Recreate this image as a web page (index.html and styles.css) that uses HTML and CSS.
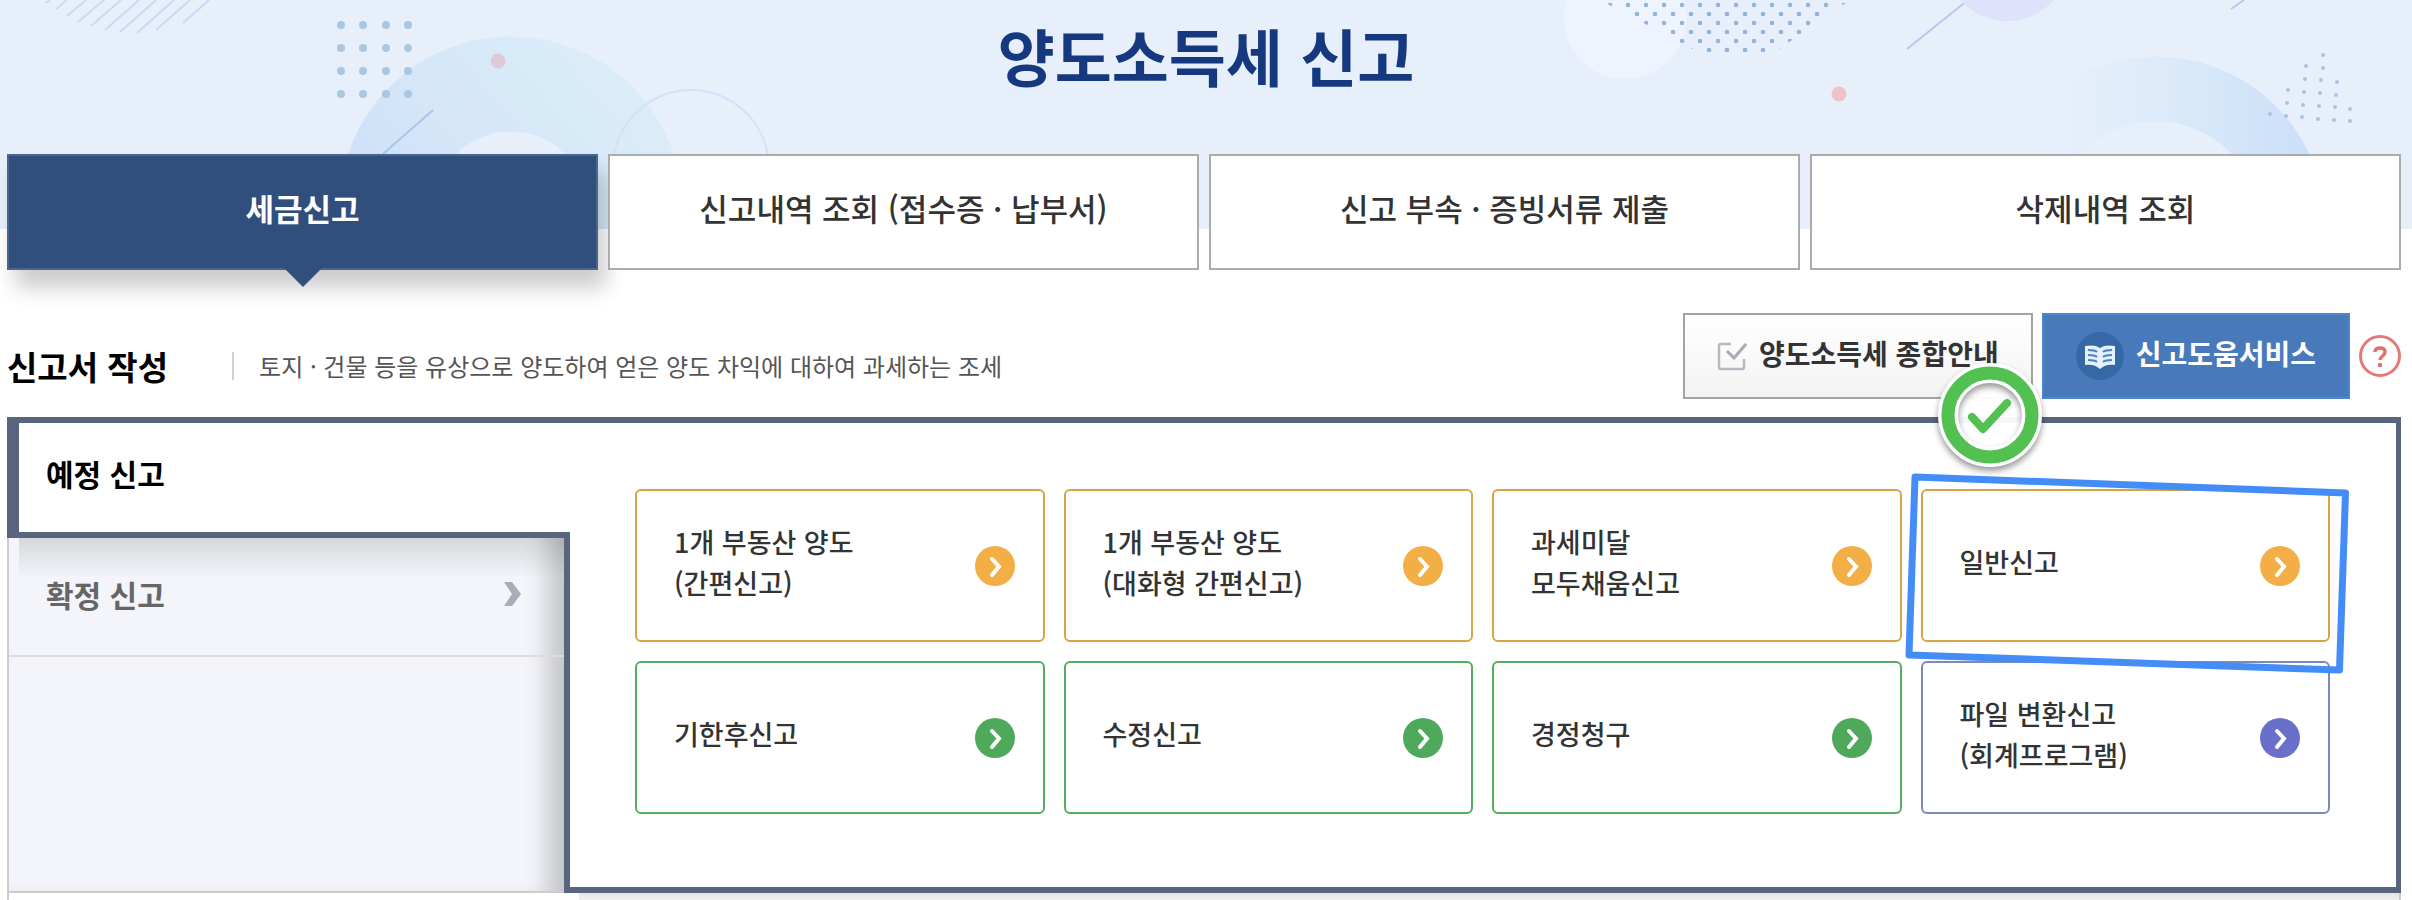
FILE: index.html
```
<!DOCTYPE html>
<html lang="ko">
<head>
  <meta charset="UTF-8">
  <meta name="viewport" content="width=device-width, initial-scale=1.0">
  <title>양도소득세 신고</title>
  <link rel="stylesheet" href="styles.css">
</head>
<body>

<svg class="symbols" aria-hidden="true">
  <symbol id="arrow" viewBox="0 0 40 40">
    <circle cx="20" cy="20" r="20" fill="currentColor"/>
    <path d="M17 13l7 7.500-7 8.500" fill="none" stroke="#fff" stroke-width="4" stroke-linecap="round"/>
  </symbol>
</svg>

<header class="banner">
  <svg class="banner-art" viewBox="0 0 2412 229" preserveAspectRatio="xMidYMin slice" aria-hidden="true">
    <defs>
      <linearGradient id="ringLeft" x1="0" y1="0.700" x2="0.800" y2="0">
        <stop offset="0" stop-color="#cddff8"/>
        <stop offset="0.500" stop-color="#d4e6f7"/>
        <stop offset="1" stop-color="#d9ecf8"/>
      </linearGradient>
      <linearGradient id="ringRight" x1="0" y1="0" x2="1" y2="0">
        <stop offset="0.100" stop-color="#dcebf9" stop-opacity="0"/>
        <stop offset="0.700" stop-color="#d6e7f8"/>
        <stop offset="1" stop-color="#cde0fa"/>
      </linearGradient>
      <pattern id="dots" x="1608" y="-2" width="18" height="18" patternUnits="userSpaceOnUse">
        <circle cx="2" cy="7" r="2.300" fill="#93b3dc"/>
        <circle cx="11" cy="16" r="2.300" fill="#93b3dc"/>
      </pattern>
    </defs>
    <path d="M46 3l4-3M56 9l11-9M67 16l19-16M78 22l26-22M91 26l30-26M105 30l34-30M120 32l36-32M137 33l37-33M156 30l34-30M183 23l26-23" stroke="#c6dcf3" stroke-width="2"/>
    <circle cx="511" cy="208" r="124" fill="none" stroke="url(#ringLeft)" stroke-width="95"/>
    <g fill="#a9c7e1">
      <circle cx="341" cy="25" r="4"/><circle cx="363" cy="25" r="4"/><circle cx="386" cy="25" r="4"/><circle cx="408" cy="25" r="4"/>
      <circle cx="341" cy="48" r="4"/><circle cx="363" cy="48" r="4"/><circle cx="386" cy="48" r="4"/><circle cx="408" cy="48" r="4"/>
      <circle cx="341" cy="71" r="4"/><circle cx="363" cy="71" r="4"/><circle cx="386" cy="71" r="4"/><circle cx="408" cy="71" r="4"/>
      <circle cx="341" cy="94" r="4"/><circle cx="363" cy="94" r="4"/><circle cx="386" cy="94" r="4"/><circle cx="408" cy="94" r="4"/>
    </g>
    <path d="M433 110l-50 44" stroke="#a9c6ea" stroke-width="2"/>
    <circle cx="498" cy="61" r="7.500" fill="#dccbd7"/>
    <circle cx="691" cy="168" r="78" fill="none" stroke="#d4e0f8" stroke-width="2"/>
    <circle cx="1625" cy="18" r="61" fill="#eef4fe"/>
    <path d="M1600 0h250l-78 54h-70z" fill="url(#dots)"/>
    <path d="M1968 0l-61 49M2244 0l-13 9" stroke="#b4c9ec" stroke-width="2"/>
    <circle cx="2007" cy="-42" r="63" fill="#dee2fa"/>
    <circle cx="1839" cy="94" r="7.500" fill="#efc3c6"/>
    <circle cx="2156" cy="226" r="137" fill="none" stroke="url(#ringRight)" stroke-width="65"/>
    <g fill="#a9c2e0">
      <circle cx="2323" cy="55" r="2"/>
      <circle cx="2306" cy="66" r="2"/><circle cx="2323" cy="68" r="2"/>
      <circle cx="2305" cy="79" r="2"/><circle cx="2321" cy="80" r="2"/><circle cx="2337" cy="82" r="2"/>
      <circle cx="2288" cy="90" r="2"/><circle cx="2304" cy="92" r="2"/><circle cx="2320" cy="93" r="2"/><circle cx="2336" cy="95" r="2"/>
      <circle cx="2287" cy="103" r="2"/><circle cx="2303" cy="105" r="2"/><circle cx="2319" cy="106" r="2"/><circle cx="2335" cy="107" r="2"/><circle cx="2350" cy="109" r="2"/>
      <circle cx="2270" cy="114" r="2"/><circle cx="2286" cy="116" r="2"/><circle cx="2302" cy="117" r="2"/><circle cx="2318" cy="119" r="2"/><circle cx="2334" cy="120" r="2"/><circle cx="2350" cy="121" r="2"/>
    </g>
  </svg>
  <h1>양도소득세 신고</h1>
</header>

<main class="content">
  <nav class="tabs">
    <button type="button" class="tab active">세금신고</button>
    <button type="button" class="tab">신고내역 조회 (접수증 · 납부서)</button>
    <button type="button" class="tab">신고 부속 · 증빙서류 제출</button>
    <button type="button" class="tab">삭제내역 조회</button>
  </nav>

  <div class="section-head">
    <h2>신고서 작성</h2>
    <p>토지 · 건물 등을 유상으로 양도하여 얻은 양도 차익에 대하여 과세하는 조세</p>
    <div class="actions">
      <button type="button" class="btn btn-guide">
        <svg width="30" height="30" viewBox="0 0 30 30" fill="none" aria-hidden="true">
          <path d="M14 3H4q-2 0-2 2v21q0 2 2 2h21q2 0 2-2v-8" stroke="#b5bac2" stroke-width="2.500"/>
          <path d="M10 10l7 7L29 3" stroke="#a6abb6" stroke-width="3"/>
        </svg>
        <span>양도소득세 종합안내</span>
      </button>
      <button type="button" class="btn btn-help">
        <svg width="48" height="48" viewBox="0 0 48 48" aria-hidden="true">
          <circle cx="24" cy="24" r="24" fill="#3569a6"/>
          <path d="M24 16c-4-3-9-3-15-2v19c6-1 11 0 15 4 4-4 9-5 15-4V14c-6-1-11-1-15 2z" fill="#e4f0fb"/>
          <path d="M12 18c4 0 7 0 9 2M12 23c4 0 7 0 9 2M12 28c4 0 7 0 9 2M36 18c-4 0-7 0-9 2M36 23c-4 0-7 0-9 2M36 28c-4 0-7 0-9 2" fill="none" stroke="#4a83c2" stroke-width="2"/>
        </svg>
        <span>신고도움서비스</span>
      </button>
      <button type="button" class="btn-question" aria-label="도움말">
        <svg width="42" height="42" viewBox="0 0 42 42" fill="none" aria-hidden="true">
          <circle cx="21" cy="21" r="19.500" stroke="#e37a78" stroke-width="3"/>
          <path d="M16 17c0-3 2-4 5-4s5 1 5 4c0 4-5 4-5 8" stroke="#e0706e" stroke-width="3.500"/>
          <circle cx="21" cy="30" r="2.200" fill="#e0706e"/>
        </svg>
      </button>
    </div>
  </div>

  <div class="panel">
    <div class="side-menu">
      <button type="button" class="side-item active">예정 신고</button>
      <button type="button" class="side-item">
        확정 신고
        <svg width="18" height="24" viewBox="0 0 18 24" aria-hidden="true"><path d="M0 0h8l9 12-9 12H0l8-12z" fill="#a9acb9"/></svg>
      </button>
    </div>
    <div class="panel-body">
      <ul class="cards">
        <li><a href="#" class="card orange">1개 부동산 양도<br>(간편신고)<svg class="arrow"><use href="#arrow"/></svg></a></li>
        <li><a href="#" class="card orange">1개 부동산 양도<br>(대화형 간편신고)<svg class="arrow"><use href="#arrow"/></svg></a></li>
        <li><a href="#" class="card orange">과세미달<br>모두채움신고<svg class="arrow"><use href="#arrow"/></svg></a></li>
        <li class="marked">
          <a href="#" class="card orange">일반신고<svg class="arrow"><use href="#arrow"/></svg></a>
          <svg class="mark-box" viewBox="0 0 440 200" preserveAspectRatio="none" aria-hidden="true">
            <path d="M10 7l430 16-6 177L4 185z" vector-effect="non-scaling-stroke"/>
          </svg>
          <svg class="mark-check" viewBox="0 0 120 120" aria-hidden="true">
            <circle cx="60" cy="60" r="34" fill="#fff" fill-opacity="0.940"/>
            <g class="mark-ring" fill="none">
              <circle cx="60" cy="60" r="42" stroke="#fff" stroke-width="20"/>
              <circle cx="60" cy="60" r="42" stroke="#52c152" stroke-width="13"/>
            </g>
            <path d="M42 62l11 12 24-26" fill="none" stroke="#52c152" stroke-width="8" stroke-linecap="round" stroke-linejoin="round"/>
          </svg>
        </li>
        <li><a href="#" class="card green">기한후신고<svg class="arrow"><use href="#arrow"/></svg></a></li>
        <li><a href="#" class="card green">수정신고<svg class="arrow"><use href="#arrow"/></svg></a></li>
        <li><a href="#" class="card green">경정청구<svg class="arrow"><use href="#arrow"/></svg></a></li>
        <li><a href="#" class="card purple">파일 변환신고<br>(회계프로그램)<svg class="arrow"><use href="#arrow"/></svg></a></li>
      </ul>
    </div>
  </div>
  <div class="panel-foot"></div>
</main>

</body>
</html>
```

FILE: styles.css
```
* {
  box-sizing: border-box;
}

body {
  margin: 0;
  font-family: "Noto Sans CJK KR", "Noto Sans", sans-serif;
  background-color: #fff;
  color: #333;
}

h1, h2, p, ul {
  margin: 0;
  padding: 0;
}

button {
  font-family: inherit;
  cursor: pointer;
}

.symbols {
  display: none;
}

.banner {
  position: relative;
  height: 229px;
  background-color: #e7effb;
}

.banner-art {
  position: absolute;
  top: 0;
  left: 0;
  width: 100%;
  height: 100%;
}

.banner h1 {
  position: relative;
  padding-top: 9px;
  font-size: 62px;
  line-height: 92px;
  text-align: center;
  color: #15387f;
}

.content {
  position: relative;
  margin-top: -75px;
  padding: 0 11px 0 7px;
}

.tabs {
  display: grid;
  grid-template-columns: repeat(4, 1fr);
  gap: 10px;
}

.tab {
  position: relative;
  height: 116px;
  padding: 0 0 10px;
  border: 2px solid #ababab;
  background-color: #fff;
  font-size: 31px;
  font-weight: 500;
  color: #333;
}

.tab.active {
  border-color: #4a6590;
  background-color: #304f7d;
  box-shadow: 8px 18px 20px rgba(0, 0, 0, 0.2);
  font-weight: bold;
  color: #fff;
}

.tab.active::after {
  content: "";
  position: absolute;
  top: 100%;
  left: 50%;
  margin-left: -19px;
  border: 19px solid transparent;
  border-top-color: #304f7d;
  border-bottom: 0;
}

.section-head {
  display: flex;
  align-items: center;
  height: 147px;
  padding-top: 24px;
}

.section-head h2 {
  margin-top: 20px;
  font-size: 33px;
  line-height: 48px;
  color: #000;
}

.section-head p {
  margin: 20px 0 0 64px;
  padding-left: 25px;
  border-left: 2px solid #d0d0d0;
  font-size: 24px;
  line-height: 28px;
  color: #555;
}

.actions {
  display: flex;
  align-items: center;
  gap: 9px;
  margin-left: auto;
}

.btn {
  display: flex;
  align-items: center;
  justify-content: center;
  gap: 12px;
  height: 86px;
  padding: 0 32px;
  font-size: 28px;
  font-weight: bold;
}

.btn span {
  padding-bottom: 6px;
}

.btn-guide {
  border: 2px solid #a3a3a3;
  background: linear-gradient(#fff, #f3f3f3);
  color: #333;
}

.btn-help {
  border: 2px solid #4a86cc;
  background-color: #4879bb;
  color: #fff;
}

.btn-question {
  height: 42px;
  padding: 0;
  border: 0;
  background: none;
}

.panel {
  display: flex;
  align-items: stretch;
  min-height: 476px;
  border-right: 5px solid #59657f;
}

.side-menu {
  position: relative;
  flex: 0 0 557px;
  border-left: 2px solid #ccc;
  border-bottom: 2px solid #ccc;
  background-color: #f3f5fa;
  box-shadow: inset -30px 0 24px -14px rgba(0, 0, 0, 0.2);
}

.side-item {
  display: flex;
  align-items: center;
  justify-content: space-between;
  width: 100%;
  height: 119px;
  padding: 0 42px 6px 37px;
  border: 0;
  border-bottom: 2px solid #dcdcdc;
  background: none;
  font-size: 30px;
  font-weight: bold;
  color: #666;
}

.side-item.active {
  position: relative;
  width: calc(100% + 8px);
  height: 121px;
  margin-left: -2px;
  padding: 0 0 10px 27px;
  border: 6px solid #59657f;
  border-left-width: 12px;
  border-right: 0;
  background-color: #fff;
  color: #000;
}

.side-item.active::after {
  content: "";
  position: absolute;
  top: calc(100% + 6px);
  left: 0;
  right: 6px;
  height: 40px;
  background: linear-gradient(rgba(0, 0, 0, 0.12), rgba(0, 0, 0, 0));
}

.panel-body {
  flex: 1;
  padding: 66px 66px 66px 65px;
  border: 6px solid #59657f;
  border-right: 0;
  background-color: #fff;
}

.panel-foot {
  height: 7px;
  border: 2px solid #ccc;
  border-width: 0 2px;
  background: linear-gradient(#e4e4e4, #f0f0f0) no-repeat 570px 0;
}

.cards {
  display: grid;
  grid-template-columns: repeat(4, 1fr);
  gap: 19px;
  list-style: none;
}

.cards li {
  position: relative;
}

.cards .marked {
  z-index: 1;
}

.card {
  display: flex;
  flex-direction: column;
  justify-content: center;
  height: 153px;
  padding: 0 80px 8px 37px;
  border: 2px solid;
  border-radius: 6px;
  background-color: #fff;
  font-size: 27px;
  font-weight: 500;
  line-height: 41px;
  color: #333;
  text-decoration: none;
}

.arrow {
  position: absolute;
  top: 57px;
  right: 30px;
  width: 40px;
  height: 40px;
}

.card.orange {
  border-color: #d6a545;
}

.orange .arrow {
  color: #f4ae46;
}

.card.green {
  border-color: #55ad61;
}

.green .arrow {
  color: #4eaa5a;
}

.card.purple {
  border-color: #7f88bb;
}

.purple .arrow {
  color: #6a6fca;
}

.mark-box {
  position: absolute;
  top: -19px;
  left: -16px;
  width: calc(100% + 31px);
  height: 200px;
  overflow: visible;
  pointer-events: none;
}

.mark-box path {
  fill: none;
  stroke: #448df7;
  stroke-width: 7px;
  stroke-linejoin: round;
}

.mark-check {
  position: absolute;
  top: -134px;
  left: 9px;
  width: 120px;
  height: 120px;
  overflow: visible;
}

.mark-ring {
  filter: drop-shadow(0 4px 3px rgba(0, 0, 0, 0.4));
}
```
